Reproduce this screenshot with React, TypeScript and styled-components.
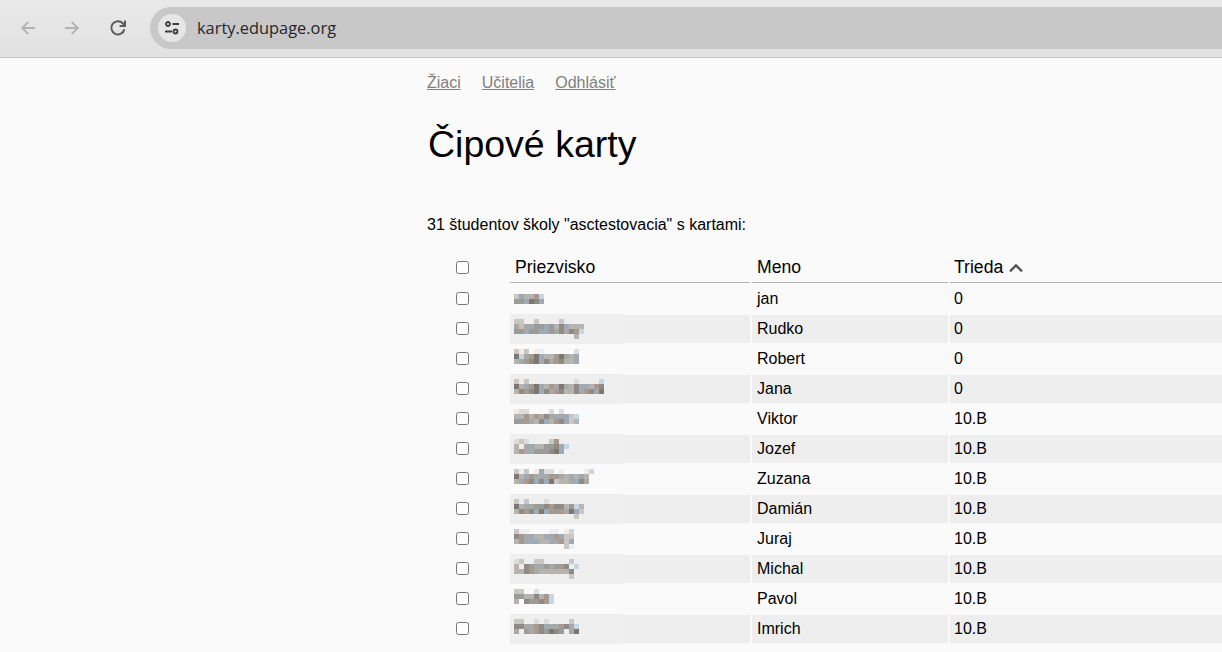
import styled, { createGlobalStyle } from "styled-components";

const GlobalStyle = createGlobalStyle`
  html, body {
    margin: 0;
    height: 652px;
    overflow: hidden;
    background: #fafafa;
  }
  body {
    font-family: "Liberation Sans", Arial, sans-serif;
    font-size: 16px;
    color: #000;
  }
`;

// shades of the pixelated surnames, 5px blocks
const shades: Record<string, string> = {
  "1": "#f1ece8",
  "2": "#dcdcdc",
  "3": "#c9c7c4",
  "4": "#b6b4af",
  "5": "#a8a8a6",
  "6": "#9b9b98",
  "7": "#8e8a85",
  "8": "#7d7771",
  b: "#c6d6e6",
  l: "#e8eff5",
  e: "#a0aab4",
  w: "#a8998e",
  p: "#d0bcb0",
};

const students = [
  { mosaic: ["", "3e44wb", "66e87e"], name: "jan", group: "0" },
  { mosaic: ["33..3....3l", "5p5e66e647e444", "66e66ee65757wb", "............4"], name: "Rudko", group: "0" },
  { mosaic: ["313.1l......2", "8b5w8e44w854e", "4ew78e75w744e"], name: "Robert", group: "0" },
  { mosaic: ["313.1l......2...1b", "84ew8e4w58547ee4w7", "47w78e75w7447ew7e8"], name: "Jana", group: "0" },
  { mosaic: ["122....2.2", "44w4w575e5e3b", "66we47e4w7e34"], name: "Viktor", group: "10.B" },
  { mosaic: ["232....3w1", "415e44667eb", "4w5e66678el"], name: "Jozef", group: "10.B" },
  { mosaic: ["313.1e22.1....1b", "84ew5e5ww54e4e4", "4ew7e7e83445e75"], name: "Zuzana", group: "10.B" },
  { mosaic: ["313...2", "84e5667w7746b4", "47w7e8ew6w58e3", "............3"], name: "Damián", group: "10.B" },
  { mosaic: ["31l....1l.1b", "7w5e44eewe33", "4weee44e5w3e", "..........3l"], name: "Juraj", group: "10.B" },
  { mosaic: ["23..33.....3", "417we5656w7.b", "447w54444447", "...........3"], name: "Michal", group: "10.B" },
  { mosaic: ["33..2", "664474wb", "4.76w7wb"], name: "Pavol", group: "10.B" },
  { mosaic: ["33..2.2....3", "7755w7e55w75b", "5.65w76876.58"], name: "Imrich", group: "10.B" },
];

const BLOCK = 5;

const App = () => {
  return (
    <>
      <GlobalStyle />
      <Toolbar>
        <NavIcon viewBox="0 0 20 20" $muted>
          <path d="M17 10H4.5M10.4 3.8 4.2 10l6.2 6.2" />
        </NavIcon>
        <NavIcon viewBox="0 0 20 20" $muted>
          <path d="M3 10h12.5M9.6 3.8l6.2 6.2-6.2 6.2" />
        </NavIcon>
        <ReloadIcon viewBox="0 0 20 20">
          <path d="M16.4 11.2a6.6 6.6 0 1 1-1.6-5.9l1.5 1.7" />
          <path d="M17 2.6V8h-5.4" />
        </ReloadIcon>
        <AddressBar>
          <SiteInfo>
            <svg width="18" height="18" viewBox="0 0 18 18" fill="none" stroke="#3c3c3c" strokeWidth="1.8">
              <circle cx="5" cy="5" r="2" />
              <path d="M9.5 5H16M2 12.5h7" />
              <circle cx="12.5" cy="12.5" r="2" />
            </svg>
          </SiteInfo>
          <Url>karty.edupage.org</Url>
        </AddressBar>
      </Toolbar>

      <Content>
        <Links>
          <a href="#ziaci">Žiaci</a>
          <a href="#ucitelia">Učitelia</a>
          <a href="#odhlasit">Odhlásiť</a>
        </Links>
        <Title>Čipové karty</Title>
        <Summary>31 študentov školy "asctestovacia" s kartami:</Summary>

        <Table>
          <colgroup>
            <col width="81" />
            <col width="240" />
            <col width="196" />
            <col width="300" />
          </colgroup>
          <thead>
            <tr>
              <CheckHead>
                <Check type="checkbox" />
              </CheckHead>
              <Head>Priezvisko</Head>
              <Head>Meno</Head>
              <Head>
                Trieda
                <SortIcon viewBox="0 0 16 10">
                  <path d="M2 8.4 8 2.4l6 6" />
                </SortIcon>
              </Head>
            </tr>
          </thead>
          <tbody>
            {students.map((student, index) => (
              <tr key={index}>
                <CheckCell>
                  <Check type="checkbox" />
                </CheckCell>
                <Cell $striped={index % 2 === 1}>
                  <Mosaic viewBox="0 0 113 30" shapeRendering="crispEdges">
                    {index % 2 === 1 && <rect width="113" height="30" fill="#efefef" />}
                    {student.mosaic.map((line, y) =>
                      line.split("").map((ch, x) =>
                        shades[ch] ? (
                          <rect
                            key={`${x}-${y}`}
                            x={4 + x * BLOCK}
                            y={5 + y * BLOCK}
                            width={BLOCK}
                            height={BLOCK}
                            fill={shades[ch]}
                          />
                        ) : null
                      )
                    )}
                  </Mosaic>
                </Cell>
                <Cell $striped={index % 2 === 1}>{student.name}</Cell>
                <Cell $striped={index % 2 === 1}>{student.group}</Cell>
              </tr>
            ))}
          </tbody>
        </Table>
      </Content>
    </>
  );
};

export default App;

const Toolbar = styled.div`
  display: flex;
  align-items: center;
  box-sizing: border-box;
  height: 58px;
  padding: 0 0 2px 18px;
  background: linear-gradient(#e9e9e9, #e1e1e1);
  border-bottom: 1px solid #c6c6c6;
`;

const NavIcon = styled.svg<{ $muted?: boolean }>`
  width: 20px;
  height: 20px;
  margin-right: 24px;
  fill: none;
  stroke: ${(props) => (props.$muted ? "#b2b2b2" : "#5c5c5c")};
  stroke-width: 1.8;
`;

const ReloadIcon = styled(NavIcon)`
  margin-left: 2px;
  stroke-width: 2;
`;

const AddressBar = styled.div`
  display: flex;
  align-items: center;
  flex: 1;
  height: 42px;
  margin-left: -2px;
  padding-left: 8px;
  background: #c8c8c8;
  border-radius: 21px 0 0 21px;
`;

const SiteInfo = styled.div`
  display: flex;
  align-items: center;
  justify-content: center;
  width: 28px;
  height: 28px;
  border-radius: 50%;
  background: #e6e6e6;
`;

const Url = styled.span`
  margin-left: 11px;
  font-family: "Open Sans", sans-serif;
  font-size: 16.4px;
  color: #26262c;
`;

const Content = styled.div`
  padding: 16px 0 0 427px;
`;

const Links = styled.nav`
  display: flex;
  gap: 21px;
  line-height: 18px;

  a {
    color: #808080;
  }
`;

const Title = styled.h1`
  margin: 30px 0 50px 1px;
  font-size: 37.5px;
  font-weight: 400;
  line-height: 44px;
`;

const Summary = styled.p`
  margin: 0 0 16px;
  line-height: 18px;
`;

const Table = styled.table`
  margin-left: -2px;
  table-layout: fixed;
  width: 825px;
  border-collapse: separate;
  border-spacing: 2px;
`;

const CheckHead = styled.th`
  padding: 0;
  text-align: center;
`;

const Head = styled.th`
  height: 30px;
  padding: 0 5px;
  font-size: 17.6px;
  font-weight: 400;
  text-align: left;
  border-bottom: 1px solid #b4b4b4;

  &:last-child {
    padding-left: 4px;
  }
`;

const SortIcon = styled.svg`
  width: 16px;
  height: 10px;
  margin-left: 5px;
  fill: none;
  stroke: #505050;
  stroke-width: 2.2;
`;

const CheckCell = styled.td`
  padding: 0 0 2px;
  text-align: center;
`;

const Check = styled.input`
  display: block;
  width: 13px;
  height: 13px;
  margin: 0 auto;
  transform: translateX(-5px);
`;

const Cell = styled.td<{ $striped: boolean }>`
  position: relative;
  height: 28px;
  padding: 0 5px;
  box-sizing: border-box;
  background: ${(props) => (props.$striped ? "#eeeeee" : "transparent")};

  &:last-child {
    padding-left: 4px;
  }
`;

const Mosaic = styled.svg`
  position: absolute;
  top: -1px;
  left: 0;
  width: 113px;
  height: 30px;
`;
